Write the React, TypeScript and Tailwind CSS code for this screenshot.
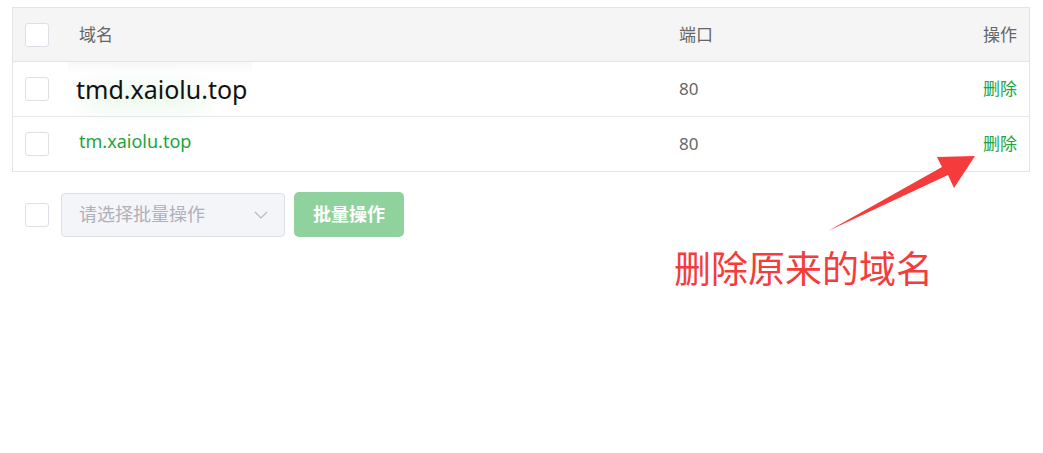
import React from 'react';

const font = { fontFamily: '"Noto Sans", "Noto Sans CJK SC", sans-serif' };

function Checkbox() {
  return <span className="block h-6 w-6 shrink-0 rounded-[3px] border border-[#dcdfe6] bg-white" />;
}

const rows = [
  { domain: 'tmd.xaiolu.top', port: '80', pasted: true },
  { domain: 'tm.xaiolu.top', port: '80', pasted: false },
];

function Arrow() {
  return (
    <svg className="pointer-events-none absolute left-0 top-0" width="1043" height="453">
      <polygon points="828,231 942,167 937,157 975,156 954,188 948,175" fill="#f53b3b" />
    </svg>
  );
}

export default function App() {
  return (
    <div className="relative h-[453px] w-[1043px] bg-white" style={font}>
      <div className="pl-3 pt-[7px]">
        <div className="w-[1018px] border border-[#e4e4e4]">
          <div className="grid h-[54px] grid-cols-[66px_600px_1fr_auto] items-center border-b border-[#e4e4e4] bg-[#f5f5f5] pr-3 text-[17px] text-[#666]">
            <div className="pl-3">
              <Checkbox />
            </div>
            <div>域名</div>
            <div>端口</div>
            <div>操作</div>
          </div>
          {rows.map((r, i) => (
            <div
              key={r.domain}
              className={`grid grid-cols-[66px_600px_1fr_auto] items-center pr-3 text-[17px] text-[#666] ${i === 0 ? 'h-[55px] border-b border-[#e8e8ee]' : 'h-[54px]'}`}
            >
              <div className="pl-3">
                <Checkbox />
              </div>
              {r.pasted ? (
                <div className="-ml-[11px] flex h-full w-[184px] items-center bg-gradient-to-b from-[#f7f7f7] to-white to-20% pl-[8px]">
                  <span className="relative text-[25px] leading-none text-[#111]">
                    <span className="absolute left-[6px] top-[12px] h-[16px] w-[124px] rounded-full bg-[#cdeccf]/60 blur-md" />
                    <span className="relative">{r.domain}</span>
                  </span>
                </div>
              ) : (
                <div className="-mt-[6px] text-[18px] text-[#1fa33c]">{r.domain}</div>
              )}
              <div>{r.port}</div>
              <div className="text-[#22a53d]">删除</div>
            </div>
          ))}
        </div>
      </div>

      <div className="mt-5 flex items-center pl-[25px]">
        <Checkbox />
        <div className="ml-3 flex h-[44px] w-[224px] items-center justify-between rounded-[4px] border border-[#dcdfe6] bg-[#f4f5f9] pl-[17px] pr-4 text-[18px] text-[#b0b0b8]">
          <span>请选择批量操作</span>
          <svg width="14" height="8" viewBox="0 0 14 8" fill="none">
            <path d="M1 1l6 6 6-6" stroke="#b8bac2" strokeWidth="1.2" />
          </svg>
        </div>
        <button className="ml-[9px] h-[45px] w-[110px] rounded-[5px] bg-[#8fd29e] text-[18px] font-bold text-white">
          批量操作
        </button>
      </div>

      <Arrow />
      <div className="absolute left-[674px] top-[250px] text-[37px] leading-none text-[#f53b3b]">删除原来的域名</div>
    </div>
  );
}
